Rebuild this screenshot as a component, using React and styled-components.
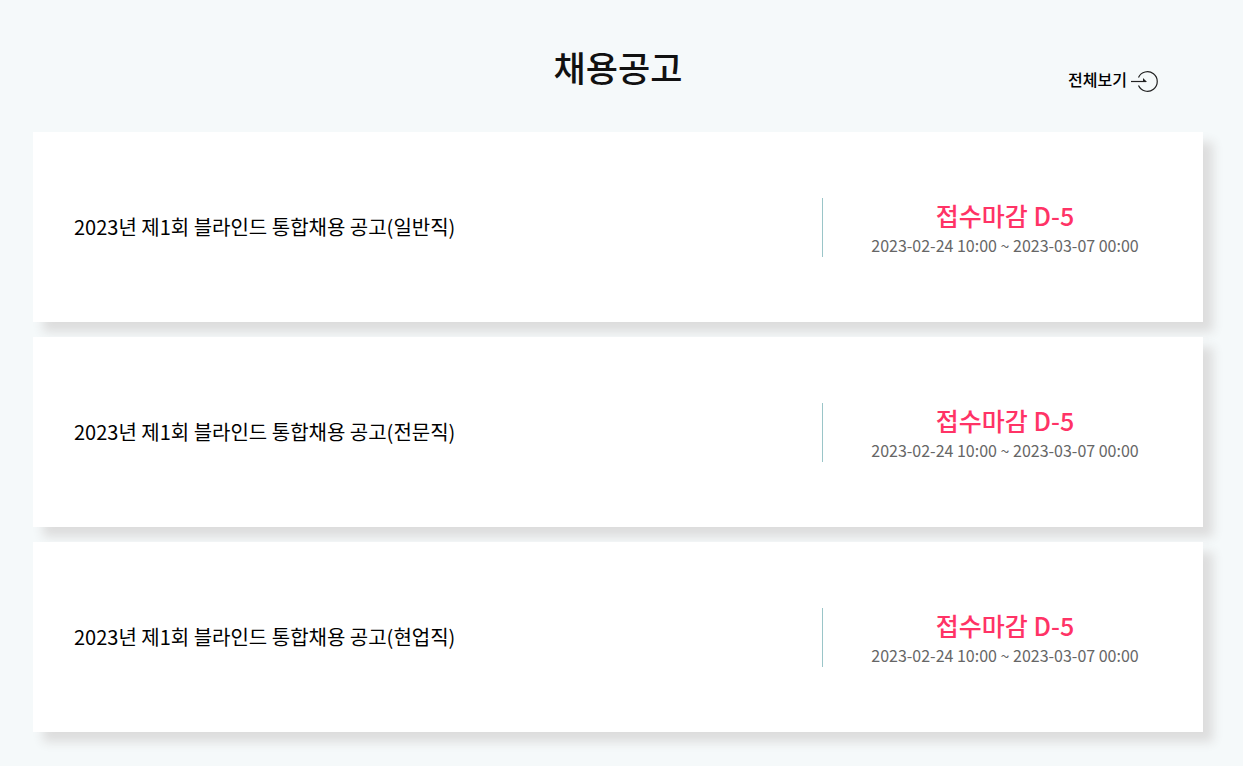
import React from 'react';
import styled, { createGlobalStyle } from 'styled-components';

const GlobalStyle = createGlobalStyle`
  * {
    box-sizing: border-box;
  }

  body {
    margin: 0;
    background: #f5f9fa;
    color: #111;
    font-family: 'Noto Sans CJK KR', sans-serif;
  }
`;

const Section = styled.section`
  padding: 37px 40px 34px 33px;
`;

const SectionHeader = styled.header`
  display: grid;
  grid-template-columns: 1fr auto 1fr;
  align-items: center;
  height: 60px;
  margin-bottom: 35px;
`;

const SectionTitle = styled.h2`
  grid-column: 2;
  margin: 0;
  font-size: 35px;
  font-weight: 500;
  line-height: 60px;
`;

const MoreLink = styled.a`
  display: flex;
  align-items: flex-end;
  justify-self: end;
  gap: 4px;
  margin-right: 44px;
  padding-top: 24px;
  color: #000;
  font-size: 16px;
  font-weight: 500;
  line-height: 28px;
  text-decoration: none;
`;

const NoticeList = styled.ul`
  display: flex;
  flex-direction: column;
  gap: 15px;
  margin: 0;
  padding: 0;
  list-style: none;
`;

const NoticeCard = styled.li`
  display: flex;
  align-items: center;
  padding: 66px 0 65px 41px;
  background: #fff;
  box-shadow: 10px 10px 10px #ddd;
`;

const NoticeTitle = styled.a`
  flex: 1;
  padding-bottom: 2px;
  color: #000;
  font-size: 20px;
  line-height: 30px;
  text-decoration: none;
`;

const NoticeStatus = styled.div`
  width: 381px;
  padding-right: 16px;
  border-left: 1px solid #9ac5c8;
  text-align: center;
`;

const Deadline = styled.strong`
  display: block;
  color: #ff3366;
  font-size: 25px;
  font-weight: 500;
  line-height: 35px;
`;

const Period = styled.span`
  display: block;
  color: #666;
  font-size: 16px;
  line-height: 24px;
`;

const notices = [
  { id: 1, title: '2023년 제1회 블라인드 통합채용 공고(일반직)' },
  { id: 2, title: '2023년 제1회 블라인드 통합채용 공고(전문직)' },
  { id: 3, title: '2023년 제1회 블라인드 통합채용 공고(현업직)' },
];

const ArrowCircleIcon = () => (
  <svg width="28" height="24" viewBox="0 0 28 24" fill="none" stroke="#222" strokeWidth="1.2" aria-hidden="true">
    <path d="M7.5 8.5A9.8 9.8 0 1 1 7.5 16.5" />
    <path d="M0 12.5H15" />
    <path d="M12 9L16 13H12Z" fill="#222" stroke="none" />
  </svg>
);

const App = () => (
  <>
    <GlobalStyle />
    <Section>
      <SectionHeader>
        <SectionTitle>채용공고</SectionTitle>
        <MoreLink href="#">
          전체보기
          <ArrowCircleIcon />
        </MoreLink>
      </SectionHeader>
      <NoticeList>
        {notices.map(notice => (
          <NoticeCard key={notice.id}>
            <NoticeTitle href="#">{notice.title}</NoticeTitle>
            <NoticeStatus>
              <Deadline>접수마감 D-5</Deadline>
              <Period>2023-02-24 10:00 ~ 2023-03-07 00:00</Period>
            </NoticeStatus>
          </NoticeCard>
        ))}
      </NoticeList>
    </Section>
  </>
);

export default App;
